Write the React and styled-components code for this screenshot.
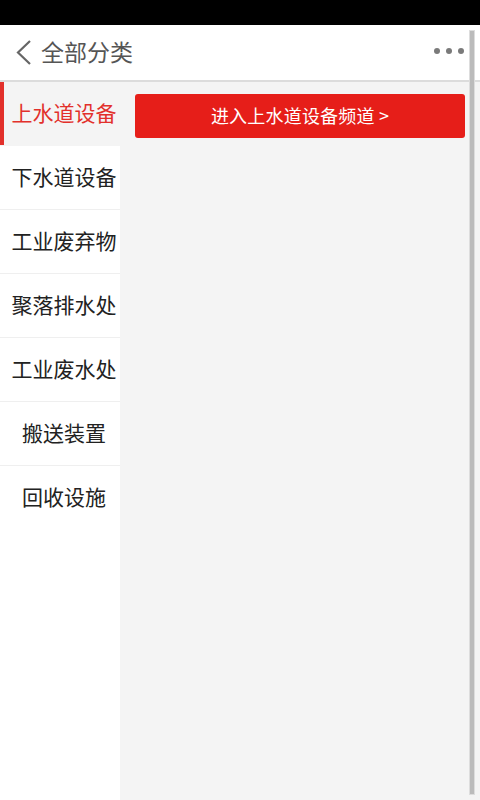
import React, { useState } from "react";
import styled, { createGlobalStyle } from "styled-components";

const GlobalStyle = createGlobalStyle`
  html, body {
    margin: 0;
    padding: 0;
    height: 100%;
    background: #fff;
    font-family: "Noto Sans CJK SC", "Noto Sans", sans-serif;
  }
  #root {
    height: 100%;
  }
`;

const Screen = styled.div`
  position: relative;
  width: 480px;
  height: 800px;
  display: flex;
  flex-direction: column;
  overflow: hidden;
  background: #fff;
`;

const StatusBar = styled.div`
  height: 25px;
  background: #000;
  flex-shrink: 0;
`;

const Header = styled.div`
  height: 55px;
  display: flex;
  align-items: center;
  padding: 0 15px;
  border-bottom: 2px solid #dcdcdc;
  flex-shrink: 0;
`;

const BackButton = styled.button`
  border: none;
  background: none;
  padding: 0;
  display: flex;
  align-items: center;
  cursor: pointer;
`;

const Title = styled.h1`
  margin: 0 0 3px 8px;
  font-size: 23px;
  font-weight: 400;
  color: #555;
`;

const More = styled.div`
  margin-left: auto;
  margin-right: 1px;
  margin-bottom: 3px;
  display: flex;
  gap: 6px;
`;

const Dot = styled.span`
  width: 6px;
  height: 6px;
  border-radius: 50%;
  background: #7a7a7a;
`;

const Body = styled.div`
  flex: 1;
  display: flex;
`;

const Sidebar = styled.ul`
  width: 120px;
  margin: 0;
  padding: 0;
  list-style: none;
  background: #fff;
  flex-shrink: 0;
`;

const Item = styled.li`
  position: relative;
  box-sizing: border-box;
  height: 64px;
  display: flex;
  align-items: center;
  justify-content: center;
  padding: 0 0 4px 8px;
  font-size: 21px;
  color: ${(p) => (p.$active ? "#e2302b" : "#222")};
  background: ${(p) => (p.$active ? "#f4f4f4" : "#fff")};
  border-bottom: 1px solid ${(p) => (p.$active ? "#f4f4f4" : "#efefef")};
  cursor: pointer;

  &:last-child {
    border-bottom: none;
  }

  &::before {
    content: "";
    display: ${(p) => (p.$active ? "block" : "none")};
    position: absolute;
    left: 0;
    top: 0;
    bottom: 0;
    width: 4px;
    background: #e2302b;
  }
`;

const Content = styled.div`
  flex: 1;
  background: #f4f4f4;
  padding: 12px 15px 0 15px;
`;

const ChannelButton = styled.button`
  width: 100%;
  height: 44px;
  padding: 0 0 3px;
  border: none;
  border-radius: 3px;
  background: #e61e19;
  color: #fff;
  font-family: inherit;
  font-size: 18px;
  letter-spacing: 0.2px;
  cursor: pointer;
`;

const Scrollbar = styled.div`
  position: absolute;
  right: 5px;
  top: 30px;
  bottom: 5px;
  width: 4px;
  background: #bbb;
  border: 1px solid #ddd;
`;

const categories = [
  "上水道设备",
  "下水道设备",
  "工业废弃物",
  "聚落排水处",
  "工业废水处",
  "搬送装置",
  "回收设施",
];

export default function App() {
  const [active, setActive] = useState(0);

  return (
    <Screen>
      <GlobalStyle />
      <StatusBar />
      <Header>
        <BackButton aria-label="back">
          <svg width="18" height="26" viewBox="0 0 18 26">
            <path
              d="M15 1 L3 12.5 L15 24"
              fill="none"
              stroke="#666"
              strokeWidth="2.2"
            />
          </svg>
        </BackButton>
        <Title>全部分类</Title>
        <More>
          <Dot />
          <Dot />
          <Dot />
        </More>
      </Header>
      <Body>
        <Sidebar>
          {categories.map((c, i) => (
            <Item key={c} $active={i === active} onClick={() => setActive(i)}>
              {c}
            </Item>
          ))}
        </Sidebar>
        <Content>
          <ChannelButton>进入{categories[active]}频道 &gt;</ChannelButton>
        </Content>
      </Body>
      <Scrollbar />
    </Screen>
  );
}
